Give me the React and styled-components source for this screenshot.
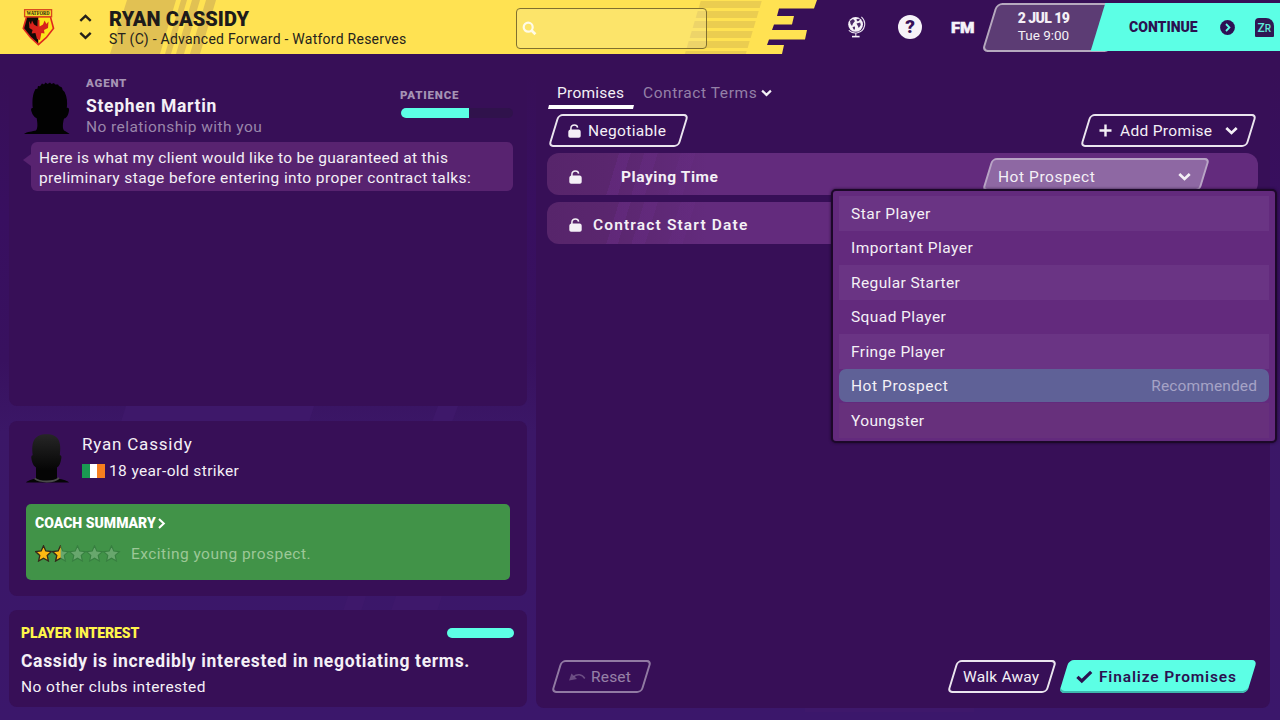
import React from "react";
import styled, { createGlobalStyle, css } from "styled-components";

const Global = createGlobalStyle`
  * { box-sizing: border-box; }
  html, body { margin: 0; padding: 0; }
  body { width: 1280px; height: 720px; overflow: hidden; font-family: Roboto, "Liberation Sans", sans-serif; }
`;

const Page = styled.div`
  position: relative;
  width: 1280px;
  height: 720px;
  display: flex;
  flex-direction: column;
  overflow: hidden;
  color: #f4f0f6;
  background: linear-gradient(180deg, #370f57 0, #370f57 10%, #380f60 30%, #38115f 50%, #3b1767 60%, #3b176b 100%);
`;
const BackdropArt = styled.svg`
  position: absolute;
  left: 0;
  top: 0;
`;

const Text = styled.span`
  display: block;
  white-space: nowrap;
  font-size: ${(p) => p.$size || 15.5}px;
  font-weight: ${(p) => p.$weight || 400};
  letter-spacing: ${(p) => p.$ls || 0}px;
  line-height: ${(p) => p.$lh || 20}px;
  color: ${(p) => p.$color || "#f4f0f6"};
`;

/* ---------- header ---------- */
const Header = styled.header`
  position: relative;
  height: 54px;
  flex: none;
  display: flex;
  background: #370f57;
`;
const HeaderArt = styled.svg`
  position: absolute;
  left: 0;
  top: 0;
`;
const HeaderRow = styled.div`
  position: relative;
  width: 100%;
  display: flex;
`;
const CrestSlot = styled.div`
  width: 78px;
  padding: 9px 0 0 22px;
`;
const Arrows = styled.div`
  width: 31px;
  padding: 14px 0 0 1px;
  display: flex;
  flex-direction: column;
  gap: 7px;
  svg { display: block; }
`;
const Titles = styled.div`
  width: 407px;
  padding-top: 7px;
`;
const Search = styled.div`
  width: 191px;
  height: 41px;
  margin-top: 8px;
  padding: 12px 0 0 5px;
  border: 1.5px solid #81702f;
  border-radius: 4px;
  background: rgba(245, 235, 180, 0.25);
`;
const HeaderIcons = styled.div`
  display: flex;
  align-items: center;
  margin-left: 140px;
  width: 143px;
`;
const Help = styled.div`
  width: 24px;
  height: 24px;
  margin-left: 32px;
  border-radius: 50%;
  background: #f6f2f8;
  color: #370f57;
  font-size: 19px;
  font-weight: 900;
  line-height: 24px;
  text-align: center;
`;
const Fm = styled.div`
  margin: 2px 0 0 29px;
  font-size: 14px;
  font-weight: 900;
  letter-spacing: -0.1px;
  -webkit-text-stroke: 0.5px #f6f2f8;
  color: #f6f2f8;
  transform: scaleX(1.18);
  transform-origin: left center;
`;
const DateBox = styled.div`
  position: relative;
  width: 108px;
  height: 49px;
  margin-top: 3px;
  padding: 5px 1px 0 0;
  text-align: center;
  &::before {
    content: "";
    position: absolute;
    inset: 0 -20px 0 -1px;
    transform: skewX(-17deg);
    border: 2px solid #b6a9bf;
    border-radius: 6px;
    background: #5c3c74;
  }
  span { position: relative; }
`;
const Continue = styled.div`
  position: relative;
  flex: 1;
  height: 48px;
  margin-top: 3px;
  display: flex;
  align-items: center;
  padding-left: 31px;
  &::before {
    content: "";
    position: absolute;
    inset: 0 -20px 0 0;
    transform: skewX(-17deg);
    background: #5cffe5;
  }
  > * { position: relative; }
`;
const Profile = styled.div`
  width: 19px;
  height: 19px;
  margin-left: 20px;
  border-radius: 4px 8px 1px 1px;
  background: #301653;
  color: #5ce9d8;
  font-size: 12px;
  font-weight: 500;
  line-height: 20px;
  text-align: center;
  small { font-size: 10px; }
`;

/* ---------- body ---------- */
const Body = styled.main`
  position: relative;
  flex: 1;
  display: flex;
  gap: 9px;
  padding: 0 10px 12px 9px;
`;
const LeftColumn = styled.div`
  width: 518px;
  display: flex;
  flex-direction: column;
`;
const Panel = styled.section`
  border-radius: 8px;
  background: #370f57;
`;
const AgentPanel = styled(Panel)`
  height: 352px;
  padding: 19px 14px 0 15px;
  border-radius: 0 0 8px 8px;
`;
const AgentHead = styled.div`
  display: flex;
  height: 69px;
  svg { margin: 9px 16px 0 0; flex: none; }
`;
const Patience = styled.div`
  margin: 12px 0 0 auto;
  width: 113px;
`;
const Meter = styled.div`
  width: ${(p) => p.$w}px;
  height: 10px;
  margin: ${(p) => p.$mt || 0}px 0 0 ${(p) => p.$ml || 0}px;
  border-radius: 5px;
  overflow: hidden;
  background: #30124c;
  &::before {
    content: "";
    display: block;
    height: 100%;
    width: ${(p) => p.$fill}%;
    background: #5cffe5;
  }
`;
const Bubble = styled.div`
  position: relative;
  margin-left: 7px;
  width: 482px;
  height: 49px;
  padding: 6px 8px;
  border-radius: 6px;
  background: #582370;
  &::before {
    content: "";
    position: absolute;
    left: -8px;
    top: 12px;
    border: 6px solid transparent;
    border-right: 8px solid #582370;
    border-left: 0;
  }
`;
const PlayerPanel = styled(Panel)`
  height: 175px;
  margin-top: 15px;
  padding: 10px 17px;
`;
const PlayerHead = styled.div`
  display: flex;
  height: 73px;
  svg.face { margin: 2px 13px 0 0; flex: none; }
`;
const AgeLine = styled.div`
  display: flex;
  align-items: center;
  height: 28px;
  gap: 4px;
`;
const Flag = styled.div`
  width: 23px;
  height: 14px;
  background: linear-gradient(90deg, #1a9a52 0 33%, #fff 33% 66%, #f77f1e 66%);
`;
const Coach = styled.div`
  height: 76px;
  width: 484px;
  padding: 7px 9px;
  border-radius: 5px;
  background: #419348;
`;
const CoachTitle = styled.div`
  display: flex;
  align-items: center;
  gap: 1px;
`;
const CoachRow = styled.div`
  display: flex;
  align-items: center;
  height: 37px;
  gap: 10px;
`;
const InterestPanel = styled(Panel)`
  height: 97px;
  margin-top: 14px;
  padding: 11px 13px 0 12px;
`;
const InterestHead = styled.div`
  display: flex;
  align-items: center;
  justify-content: space-between;
`;

const RightPanel = styled(Panel)`
  flex: 1;
  height: 654px;
  border-radius: 0 0 8px 8px;
  padding: 28px 12px 15px 11px;
  display: flex;
  flex-direction: column;
`;
const Tabs = styled.div`
  display: flex;
  height: 27px;
  padding-left: 1px;
`;
const Tab = styled.div`
  position: relative;
  display: flex;
  align-items: flex-start;
  gap: 4px;
  padding: 0 9px;
  svg { margin-top: 7px; }
  ${(p) => p.$active && css`
    width: 86px;
    &::after {
      content: "";
      position: absolute;
      left: 0;
      right: 0;
      bottom: 0;
      height: 4px;
      background: #fff;
      clip-path: polygon(1px 0, 100% 0, calc(100% - 1px) 100%, 0 100%);
    }
  `}
`;
const Toolbar = styled.div`
  display: flex;
  justify-content: space-between;
  margin-top: 5px;
  padding: 0 7px;
`;
const SlantButton = styled.div`
  position: relative;
  width: ${(p) => p.$w}px;
  height: 33px;
  display: flex;
  align-items: center;
  gap: ${(p) => p.$gap || 0}px;
  padding: ${(p) => p.$pt || 0}px ${(p) => p.$pr || 0}px 0 ${(p) => p.$pl || 0}px;
  opacity: ${(p) => (p.$dim ? 0.5 : 1)};
  &::before {
    content: "";
    position: absolute;
    inset: 0 -1px;
    transform: skewX(-17deg);
    border-radius: 5px;
    border: 2px solid ${(p) => p.$edge || "#ebe5ef"};
    background: ${(p) => p.$fill || "transparent"};
  }
  ${(p) => p.$solid && css`
    &::before { border: 0; background: #5cffe5; box-shadow: inset 0 -2px 0 #3fb7ae; }
  `}
  > * { position: relative; flex: none; }
  > .end { margin-left: auto; }
`;
const Row = styled.div`
  position: relative;
  z-index: ${(p) => p.$z || 0};
  height: 42px;
  margin-top: ${(p) => p.$mt}px;
  padding: ${(p) => p.$pt}px 0 0 22px;
  display: flex;
  align-items: center;
  border-radius: 12px;
  width: 711px;
  background:
    linear-gradient(107deg, transparent 0 69px, rgba(110, 46, 145, 0.3) 69px 80px, transparent 80px 93px, rgba(110, 46, 145, 0.25) 93px 106px, transparent 106px 128px, rgba(110, 46, 145, 0.15) 128px 142px, transparent 142px),
    linear-gradient(90deg, #57256b 0, #5a266e 60px, #632b7d 160px);
`;
const RowLabel = styled.div`
  margin-left: ${(p) => p.$ml}px;
`;
const SelectWrap = styled.div`
  position: absolute;
  left: 441px;
  top: 5px;
`;
const Menu = styled.div`
  position: absolute;
  left: -157px;
  top: 31px;
  width: 446px;
  height: 254px;
  padding: 5px 6px;
  border: 2px solid #1c0829;
  border-radius: 5px;
  background: #632a7d;
  box-shadow: 0 0 3px rgba(20, 4, 34, 0.8);
`;
const Option = styled.div`
  display: flex;
  align-items: center;
  justify-content: space-between;
  height: 34.5px;
  padding: 1px 12px 0;
  background: ${(p) => (p.$alt ? "#6a3484" : "transparent")};
  ${(p) => p.$last && css`background: #67307c;`}
  ${(p) => p.$selected && css`
    height: 33px;
    margin: 0.5px 0 1px;
    padding-top: 0;
    border-radius: 7px;
    background: #5f6197;
  `}
`;
const Footer = styled.div`
  display: flex;
  align-items: center;
  margin-top: auto;
  padding: 0 7px 0 10px;
`;
const Spacer = styled.div`
  flex: ${(p) => (p.$w ? "none" : 1)};
  width: ${(p) => p.$w || 0}px;
`;

/* ---------- icons ---------- */
const Chevron = ({ w = 12, sw = 2.2, dir = "down", color = "#f4f0f6", className }) => {
  const d = { down: "M1.2 1.8 L6 6.4 L10.8 1.8", up: "M1.2 6.4 L6 1.8 L10.8 6.4" }[dir];
  return (
    <svg className={className} width={w} height={(w * 9) / 12} viewBox="0 0 12 9">
      <path d={d} fill="none" stroke={color} strokeWidth={sw} />
    </svg>
  );
};
const Lock = () => (
  <svg width="13" height="14" viewBox="0 0 13 14">
    <path d="M2.9 6.5 V4.4 C2.9 2 4.4 1 6.4 1 C8.3 1 9.4 2 9.6 3.6" fill="none" stroke="#f4f0f6" strokeWidth="1.5" />
    <path d="M2.6 5.6 H10.6 C12 5.6 12.7 6.6 12.7 8 V11.6 C12.7 13 12 13.8 10.8 13.8 H2.2 C1 13.8 0.3 13 0.3 11.6 V8 C0.3 6.6 1.2 5.6 2.6 5.6 Z" fill="#f4f0f6" />
  </svg>
);
const Plus = () => (
  <svg width="13" height="13" viewBox="0 0 13 13">
    <path d="M6.5 0.5 V12.5 M0.5 6.5 H12.5" stroke="#f4f0f6" strokeWidth="2.4" />
  </svg>
);
const Check = () => (
  <svg width="17" height="14" viewBox="0 0 17 14">
    <path d="M1.4 6.8 L5.8 11 L15.2 1.8" fill="none" stroke="#2b1150" strokeWidth="3.2" />
  </svg>
);
const Undo = () => (
  <svg width="17" height="10" viewBox="0 0 17 10">
    <path d="M0 8.5 L2.5 1.5 L8 7 Z" fill="#cdbfd6" opacity="0.7" />
    <path d="M4.5 4.8 C8 1.5 13 2 15.8 6.5" fill="none" stroke="#cdbfd6" strokeWidth="1.5" opacity="0.7" />
  </svg>
);
const SearchIcon = () => (
  <svg width="15" height="15" viewBox="0 0 15 15">
    <circle cx="6.2" cy="6.2" r="4.5" fill="none" stroke="#fffbe8" strokeWidth="2.2" />
    <path d="M9.6 9.6 L13.4 13.2" stroke="#fffbe8" strokeWidth="2.8" />
  </svg>
);
const Globe = () => (
  <svg width="19" height="22" viewBox="0 0 19 22">
    <circle cx="8.6" cy="8.4" r="7.4" fill="#f6f2f8" />
    <path d="M3 5 L6 3 L8 5 L6 7.5 L5 10 L3.5 8 Z M9.5 3 L13 2.8 L12 5 L10 5.2 Z M9.5 7.4 L13.2 6.6 L13.8 9 L11.8 12 L10.6 9.6 Z M5.5 11 L8 10.6 L8 13.4 L6.6 13.6 Z" fill="#4b2a6a" />
    <path d="M14.4 0.8 C19.8 5.6 18.6 14.8 10.5 16.8 C7 17.4 4 16.6 1.8 14.4 M8.8 17 V20" fill="none" stroke="#e8e0ee" strokeWidth="1.1" />
    <path d="M5 20.6 H12.6" stroke="#f6f2f8" strokeWidth="1.6" />
  </svg>
);
const Crest = () => (
  <svg width="33" height="38" viewBox="0 0 33 38">
    <path d="M4 7 L29 7 L32.4 19.4 L25 29 L16.4 36.8 L8 29 L0.4 19.4 Z" fill="#e0281e" />
    <path d="M16.4 8.6 L5.2 8.6 L2.2 19.2 L9 27.8 L16.4 34.6 Z" fill="#120a06" />
    <path d="M16.4 8.6 L27.8 8.6 L30.6 19.2 L24 27.8 L16.4 34.6 Z" fill="#fce51e" />
    <path d="M7 12 L9 15.5 L10 11.5 L12 15.5 L15.4 17.5 L15.6 11 L17.4 11 L17.6 17.5 L21 15.5 L22.6 11.5 L24.4 15 L26.5 12.6 L26 19 L22 21 L22.5 24.5 L19.4 24 L18 31 L15 30 L13.4 24 L9.6 24.5 L10.6 21 L7.4 19 Z" fill="#d8231c" />
    <rect x="2.6" y="0.7" width="27" height="7" fill="#f3dc2a" stroke="#d9461e" strokeWidth="1.3" />
    <text x="16.1" y="6.4" fontSize="5.8" fontWeight="700" textAnchor="middle" fill="#2b200c" fontFamily="Liberation Serif, serif" textLength="23" lengthAdjust="spacingAndGlyphs">WATFORD</text>
  </svg>
);
const AgentFace = () => (
  <svg width="46" height="52" viewBox="0 0 46 52">
    <path
      d="M0 52 C3 49.5 9 49.5 12 48.5 C14 46 13.6 41 12.6 36 C10.6 36 8 32 7.2 28.5 C6.8 26.4 7.6 25.6 8.8 26 C8 19 8.6 12 11.5 7 L13.4 6.8 L14 4 L16 4.2 L18 1.6 L20 2.4 L21.6 0.6 L23.6 2 L26 0.6 L27.4 2 L30 1 L31 2.6 L34 2.4 L35 4 L38 5.4 L38.6 8 L40.6 10 C43 15 43.6 20 42.8 26 C45.6 25 45.4 29 44.2 32 C43.2 35 41.6 36.4 40 36.4 C38.8 41 38.2 46 40 48.5 C42 49.8 44 50.4 45.6 52 Z"
      fill="#020202"
    />
  </svg>
);
const PlayerFace = () => (
  <svg className="face" width="43" height="50" viewBox="0 0 43 50">
    <defs>
      <linearGradient id="skin" x1="0" y1="0" x2="0" y2="1">
        <stop offset="0" stopColor="#262626" />
        <stop offset="0.75" stopColor="#050505" />
      </linearGradient>
    </defs>
    <path
      d="M0 49.5 C2 47 8 46.6 10 44.8 L10 34.5 C7.6 33.4 6 29.5 5.4 25.6 C5 23.4 5.6 22 6.8 22.4 C5 9 8 1.2 20.6 1.2 C33 1.2 35.6 9 33.8 22.4 C35.4 22 35.8 24 35.2 26 C34.6 30 33.4 33.4 31 34.5 L31 44.8 C34 46.6 41 47 43 49.5 Z"
      fill="url(#skin)"
    />
    <path d="M8.6 45.4 C14 49.6 28 49.6 33 45" fill="none" stroke="#4a4a4a" strokeWidth="1.8" />
  </svg>
);
const STAR = "M8.5 0.8 L10.8 6 L16.4 6.6 L12.2 10.4 L13.4 16 L8.5 13.2 L3.6 16 L4.8 10.4 L0.6 6.6 L6.2 6 Z";
const Stars = () => (
  <svg width="86" height="17" viewBox="0 0 86 17">
    <defs>
      <clipPath id="half"><rect x="0" y="0" width="8.6" height="17" /></clipPath>
    </defs>
    {[0, 1, 2, 3, 4].map((i) => (
      <g key={i} transform={`translate(${i * 17} 0)`}>
        {i > 0 && <path d={STAR} fill="#68a76d" stroke="#377f40" strokeWidth="1.1" />}
        {i < 2 && (
          <path d={STAR} fill="#fdb913" stroke="#33291a" strokeWidth="1.3" clipPath={i === 1 ? "url(#half)" : undefined} />
        )}
      </g>
    ))}
  </svg>
);
const GoIcon = () => (
  <svg width="15" height="15" viewBox="0 0 15 15">
    <circle cx="7.5" cy="7.5" r="7.4" fill="#2e1054" />
    <path d="M6 4 L9.4 7.5 L6 11" fill="none" stroke="#5cffe5" strokeWidth="1.8" />
  </svg>
);

const options = [
  ["Star Player", 0.5],
  ["Important Player", 0.48],
  ["Regular Starter", 0.4],
  ["Squad Player", 0.42],
  ["Fringe Player", 0.38],
  ["Hot Prospect", 0.56],
  ["Youngster", 0.38],
];

export default function App() {
  return (
    <Page>
      <Global />
      <BackdropArt width="1280" height="720" viewBox="0 0 1280 720">
        <path d="M126 406 H314 L309 422 H121 Z M438 406 H458 L452 422 H432 Z M348 596 H366 L361 611 H343 Z M396 596 H442 L437 611 H391 Z M805 706 H974 V712 H805 Z" fill="#40196c" opacity="0.8" />
      </BackdropArt>
      <Header>
        <HeaderArt width="830" height="54" viewBox="0 0 830 54">
          <path d="M0 0 H817 L814 8.5 H779 L777 16 H794 L792 24.5 H774 L772 30 H807 L805 39.5 H769 L767 45 H784 L782 54 H0 Z" fill="#ffe252" />
          <path d="M127 0 H176 L160 54 H110 Z M181 0 H187 L171 54 H165 Z M192 0 H200 L184 54 H176 Z M206 0 H216 L200 54 H190 Z" fill="#e1c153" />
          {[1, 11, 21, 31, 41, 51].map((y) => (
            <path key={y} d={`M${701 - y * 0.3} ${y} h61 l-2 7 h-61 Z`} fill="#ebcd50" />
          ))}
        </HeaderArt>
        <HeaderRow>
          <CrestSlot><Crest /></CrestSlot>
          <Arrows>
            <Chevron dir="up" w={13} color="#25211a" sw={2.2} />
            <Chevron w={13} color="#25211a" sw={2.2} />
          </Arrows>
          <Titles>
            <Text $size={20} $weight={900} $lh={24} $ls={0.08} $color="#1d1b1b">RYAN CASSIDY</Text>
            <Text $size={14} $lh={17} $ls={0.25} $color="#25221d">ST (C) - Advanced Forward - Watford Reserves</Text>
          </Titles>
          <Search><SearchIcon /></Search>
          <HeaderIcons>
            <Globe />
            <Help>?</Help>
            <Fm>FM</Fm>
          </HeaderIcons>
          <DateBox>
            <Text $size={14} $weight={900} $lh={20} $ls={-0.55}>2 JUL 19</Text>
            <Text $size={13.5} $lh={15}>Tue 9:00</Text>
          </DateBox>
          <Continue>
            <Text $size={14} $weight={900} $ls={0.02} $color="#2b1150">CONTINUE</Text>
            <Spacer $w={22} />
            <GoIcon />
            <Profile>Z<small>R</small></Profile>
          </Continue>
        </HeaderRow>
      </Header>

      <Body>
        <LeftColumn>
          <AgentPanel>
            <AgentHead>
              <AgentFace />
              <div>
                <Text $size={11.5} $weight={900} $lh={21} $ls={0.8} $color="#a593b4">AGENT</Text>
                <Text $size={17.5} $weight={700} $lh={25} $ls={0.7}>Stephen Martin</Text>
                <Text $lh={16} $ls={0.43} $color="#9a86ab">No relationship with you</Text>
              </div>
              <Patience>
                <Text $size={11.5} $weight={900} $lh={20} $ls={0.8} $color="#a593b4">PATIENCE</Text>
                <Meter $w={112} $fill={61} $mt={3} $ml={1} />
              </Patience>
            </AgentHead>
            <Bubble>
              <Text $ls={0.31}>Here is what my client would like to be guaranteed at this</Text>
              <Text $ls={0.4}>preliminary stage before entering into proper contract talks:</Text>
            </Bubble>
          </AgentPanel>

          <PlayerPanel>
            <PlayerHead>
              <PlayerFace />
              <div>
                <Text $size={17} $lh={26} $ls={0.8}>Ryan Cassidy</Text>
                <AgeLine>
                  <Flag />
                  <Text $ls={0.37}>18 year-old striker</Text>
                </AgeLine>
              </div>
            </PlayerHead>
            <Coach>
              <CoachTitle>
                <Text $size={14} $weight={900} $lh={24} $ls={0.02} $color="#fff">COACH SUMMARY</Text>
                <svg width="10" height="13" viewBox="0 0 10 13"><path d="M2 2 L6.8 6.5 L2 11" fill="none" stroke="#fff" strokeWidth="2" /></svg>
              </CoachTitle>
              <CoachRow>
                <Stars />
                <Text $ls={0.47} $color="#9cc897">Exciting young prospect.</Text>
              </CoachRow>
            </Coach>
          </PlayerPanel>

          <InterestPanel>
            <InterestHead>
              <Text $size={14} $weight={900} $lh={24} $ls={-0.1} $color="#fff54a">PLAYER INTEREST</Text>
              <Meter $w={67} $fill={100} />
            </InterestHead>
            <Text $size={17.5} $weight={700} $lh={32} $ls={0.66}>Cassidy is incredibly interested in negotiating terms.</Text>
            <Text $lh={20} $ls={0.46}>No other clubs interested</Text>
          </InterestPanel>
        </LeftColumn>

        <RightPanel>
          <Tabs>
            <Tab $active><Text $lh={22} $ls={0.25}>Promises</Text></Tab>
            <Tab><Text $lh={22} $ls={0.57} $color="#9480a7">Contract Terms</Text><Chevron w={11} sw={2.4} /></Tab>
          </Tabs>
          <Toolbar>
            <SlantButton $w={129} $pl={14} $gap={7}>
              <Lock />
              <Text $ls={0.35}>Negotiable</Text>
            </SlantButton>
            <SlantButton $w={165} $pl={13} $pr={13} $gap={8}>
              <Plus />
              <Text $ls={0.33}>Add Promise</Text>
              <Chevron className="end" w={13} sw={2.5} />
            </SlantButton>
          </Toolbar>
          <Row $mt={6} $pt={5} $z={2}>
            <Lock />
            <RowLabel $ml={39}><Text $weight={700} $ls={0.57}>Playing Time</Text></RowLabel>
            <SelectWrap>
              <SlantButton $w={216} $pl={10} $pr={13} $pt={4} $edge="#b9a5c6" $fill="#8e68a3">
                <Text $ls={0.56}>Hot Prospect</Text>
                <Chevron className="end" w={13} sw={2.5} />
              </SlantButton>
              <Menu>
                {options.map(([label, ls], i) => (
                  <Option
                    key={label}
                    $alt={i % 2 === 0}
                    $last={i === options.length - 1}
                    $selected={label === "Hot Prospect"}
                  >
                    <Text $ls={ls}>{label}</Text>
                    {label === "Hot Prospect" && <Text $ls={0.12} $color="#a6a3c6">Recommended</Text>}
                  </Option>
                ))}
              </Menu>
            </SelectWrap>
          </Row>
          <Row $mt={7} $pt={4}>
            <Lock />
            <RowLabel $ml={11}><Text $weight={600} $ls={1.15} $lh={19}>Contract Start Date</Text></RowLabel>
          </Row>
          <Footer>
            <SlantButton $w={89} $pl={12} $gap={5} $dim>
              <Undo />
              <Text $ls={0.2}>Reset</Text>
            </SlantButton>
            <Spacer />
            <SlantButton $w={98} $pl={10}>
              <Text $ls={0.2}>Walk Away</Text>
            </SlantButton>
            <Spacer $w={14} />
            <SlantButton $w={186} $pl={11} $gap={6} $solid>
              <Check />
              <Text $weight={600} $ls={0.85} $color="#2b1150">Finalize Promises</Text>
            </SlantButton>
          </Footer>
        </RightPanel>
      </Body>
    </Page>
  );
}
